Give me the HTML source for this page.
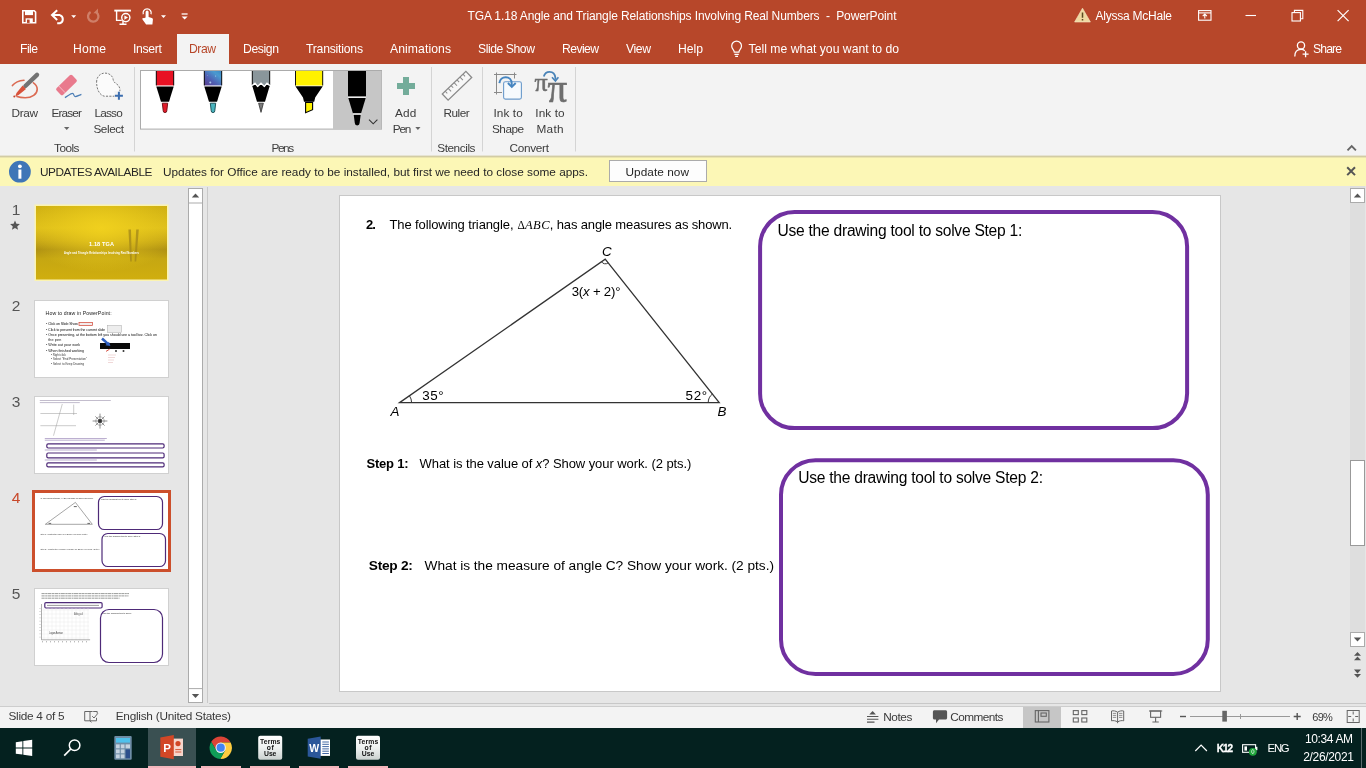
<!DOCTYPE html>
<html lang="en"><head><meta charset="utf-8"><title>TGA 1.18 Angle and Triangle Relationships Involving Real Numbers - PowerPoint</title>
<style>
html,body{margin:0;padding:0}
body{width:1366px;height:768px;overflow:hidden;position:relative;background:#E6E6E6;font-family:"Liberation Sans",sans-serif}
.r{position:absolute;left:0;width:1366px}
#titlebar{top:0;height:64px;background:#B7472A}
#tab-draw{position:absolute;left:177px;top:34px;width:52px;height:30px;background:#F3F3F3}
#ribbon{top:64px;height:92px;background:#F3F3F3;border-bottom:1px solid #D2CCA4;box-shadow:inset 0 -1px 0 #E6E3D2}
#msgbar{top:157px;height:29px;background:#FCF7B6;border-top:1px solid #EAE4AE;box-sizing:border-box}
#work{top:186px;height:520px;background:#E6E6E6}
#slide{position:absolute;left:340px;top:196px;width:880px;height:495px;background:#fff;box-shadow:0 0 0 1px #C8C8C8}
#hband{top:703px;left:209px;width:1157px;height:1px;background:#C8C8C8}
#sline{top:706px;height:1px;background:#CDCDCD}
#status{top:707px;height:21px;background:#F3F3F3}
#taskbar{top:728px;height:40px;background:#04211F}
svg{position:absolute;left:0;top:0;font-family:"Liberation Sans",sans-serif;will-change:transform}
svg text{white-space:pre}
</style></head>
<body>
<div class="r" id="titlebar"><div id="tab-draw"></div></div>
<div class="r" id="ribbon"></div>
<div class="r" id="msgbar"></div>
<div class="r" id="work"></div>
<div id="slide"></div>
<div class="r" id="hband"></div>
<div class="r" id="sline"></div>
<div class="r" id="status"></div>
<div class="r" id="taskbar"></div>
<!-- title bar + tabs -->
<svg width="1366" height="768" viewBox="0 0 1366 768">
<g fill="none" stroke="#fff" stroke-width="1.6"><path d="M22.8 10.8h11.4l1.4 1.4v10.6h-12.8z"/></g><rect x="25" y="10.5" width="8" height="4.6" fill="#fff"/><rect x="25.6" y="18.3" width="7.2" height="4.6" fill="#fff"/><rect x="27" y="19.6" width="2.6" height="3.3" fill="#B7472A"/><path d="M57.2 10.2 52 15.1l5.2 4.9M52.6 15.1h7.2a4.3 4.3 0 0 1 0 8.2h-2.6" fill="none" stroke="#fff" stroke-width="2"/><path d="M71.2 15.3h5l-2.5 2.8z" fill="#fff"/><path d="M90.600 12a5.200 5.200 0 1 0 5.600.2" fill="none" stroke="#CF7F68" stroke-width="2.300"/><path d="M93.400 13.200h4.600v-4.600z" fill="#CF7F68"/><g fill="none" stroke="#fff" stroke-width="1.4"><path d="M114.300 10.600h16.600" stroke-width="1.900"/><path d="M116.600 11v9.400h5.200M119.500 24.200h7M123 21v3"/><circle cx="125.8" cy="17.6" r="4.1" fill="#B7472A"/></g><path d="M124.4 15.4v4.4l3.6-2.2z" fill="#fff"/><path d="M145.6 17.5v-5.6a1.5 1.5 0 0 1 3 0v5l3.2 1c.9.3 1.2.9 1.1 1.8l-.5 4.9h-6.3l-3.6-5.2c-.5-.9.5-1.8 1.4-1.1z" fill="#fff"/><path d="M143.3 14.3a4.1 4.1 0 1 1 7.7 0" fill="none" stroke="#fff" stroke-width="1.3"/><path d="M161 15.3h5l-2.5 2.8z" fill="#fff"/><path d="M181.6 14h6" stroke="#fff" stroke-width="1.3"/><path d="M181.6 16.4h6l-3 3.2z" fill="#fff"/><text x="467.5" y="20" font-size="12" fill="#fff" textLength="429" lengthAdjust="spacing">TGA 1.18 Angle and Triangle Relationships Involving Real Numbers  -  PowerPoint</text>
<path d="M1082.5 8.2 1090.4 22h-15.8z" fill="#EFD9A0" stroke="#F6E9C8" stroke-width=".6"/><path d="M1082.5 12.6v5.2M1082.5 19v1.6" stroke="#5a4a20" stroke-width="1.5"/><text x="1095.5" y="20" font-size="12" fill="#fff" textLength="76.5" lengthAdjust="spacing">Alyssa McHale</text>
<g fill="none" stroke="#fff" stroke-width="1.1"><rect x="1198.6" y="10.6" width="12.4" height="9.6"/><path d="M1198.6 12.9h12.4"/><path d="M1204.8 18.4v-4.2M1202.7 16.2l2.1-2.1 2.1 2.1"/></g><path d="M1245.5 15.5h10.5" stroke="#fff" stroke-width="1.1"/><g fill="none" stroke="#fff" stroke-width="1.1"><rect x="1292" y="12.6" width="8.4" height="8.4"/><path d="M1294.4 12.4v-2h8.4v8.4h-2.2"/></g><path d="M1337.6 10.2l11 11M1348.6 10.2l-11 11" stroke="#fff" stroke-width="1.2"/><text x="20" y="52.7" font-size="12.2" fill="#fff" textLength="18" lengthAdjust="spacing">File</text>
<text x="73" y="52.7" font-size="12.2" fill="#fff" textLength="33" lengthAdjust="spacing">Home</text>
<text x="133" y="52.7" font-size="12.2" fill="#fff" textLength="29" lengthAdjust="spacing">Insert</text>
<text x="189" y="52.7" font-size="12.2" fill="#B7472A" textLength="27" lengthAdjust="spacing">Draw</text>
<text x="243" y="52.7" font-size="12.2" fill="#fff" textLength="36" lengthAdjust="spacing">Design</text>
<text x="306" y="52.7" font-size="12.2" fill="#fff" textLength="57" lengthAdjust="spacing">Transitions</text>
<text x="390" y="52.7" font-size="12.2" fill="#fff" textLength="61" lengthAdjust="spacing">Animations</text>
<text x="478" y="52.7" font-size="12.2" fill="#fff" textLength="57" lengthAdjust="spacing">Slide Show</text>
<text x="562" y="52.7" font-size="12.2" fill="#fff" textLength="37" lengthAdjust="spacing">Review</text>
<text x="626" y="52.7" font-size="12.2" fill="#fff" textLength="25" lengthAdjust="spacing">View</text>
<text x="678" y="52.7" font-size="12.2" fill="#fff" textLength="25" lengthAdjust="spacing">Help</text>
<g fill="none" stroke="#fff" stroke-width="1.2"><path d="M734.3 52.2c0-2.2-2.6-3-2.6-6.2a4.9 4.9 0 0 1 9.8 0c0 3.2-2.6 4-2.6 6.2z"/><path d="M734.400 54.400h4.400M735.200 56.400h2.800"/></g><text x="748.6" y="52.7" font-size="12.2" fill="#fff" textLength="150.5" lengthAdjust="spacing">Tell me what you want to do</text>
<g fill="none" stroke="#fff" stroke-width="1.3"><circle cx="1301" cy="45.4" r="3.6"/><path d="M1294.8 56.4c0-4.4 2.5-7 6.2-7 1.5 0 2.8.4 3.8 1.3"/><path d="M1305.6 51.2v6M1302.6 54.2h6"/></g><text x="1313" y="52.7" font-size="12.2" fill="#fff" textLength="29" lengthAdjust="spacing">Share</text>
</svg>
<!-- ribbon + message bar -->
<svg width="1366" height="768" viewBox="0 0 1366 768">
<g fill="none" stroke-linecap="round"><path d="M12.400 85.600c2.400-3 6.600-5 11.600-5.400" stroke="#DB6A52" stroke-width="1.600"/><path d="M33.400 82.800c2.400 1.600 3.800 3.800 3.800 6.400 0 5-5.400 8.600-12 8.600-3.200 0-6-.4-8.200-1.200" stroke="#DB6A52" stroke-width="1.600"/><path d="M37 74.800 25.400 86" stroke="#737373" stroke-width="4.400"/></g><path d="M22.600 85.600l3.400 3.400-7.400 6-3.400 1.500 1.300-3.600z" fill="#D8523A"/><circle cx="14.300" cy="96.600" r="1" fill="#C2452E"/><text x="11.5" y="116.6" font-size="11.8" fill="#3c3c3c" textLength="26.5" lengthAdjust="spacing">Draw</text>
<g transform="rotate(-44 66.500 85)"><rect x="55.600" y="80.300" width="21.800" height="9.400" rx="1.800" fill="#E97A8D"/><path d="M60.200 80.300v9.400" stroke="#F6C3CB" stroke-width=".9"/></g><path d="M64.900 97.600c2.600-1.400 6-4.200 7.600-4.200 1.800 0 .8 3.200 2.800 3.200 1.600 0 3.800-1.400 6.100-2.200" fill="none" stroke="#4A7DB5" stroke-width="1.200"/><text x="51.5" y="116.6" font-size="11.8" fill="#3c3c3c" textLength="30.4" lengthAdjust="spacing">Eraser</text>
<path d="M64 127h5.4l-2.700 2.900z" fill="#666"/><path d="M96.600 82c0-5.200 3.600-8.900 8.400-8.900 4.600 0 7.800 3 8.200 6.600.3 2.400 2 3.300 3.800 4.600 1.900 1.400 2.900 3.300 2.900 5.400v3.500c0 1.500-1.500 3-3 3h-12.700c-4.800-1.200-7.600-7-7.600-14.200z" fill="#FBFBFB" stroke="#777" stroke-width="1" stroke-dasharray="2.100 1.300"/><rect x="114.400" y="91.200" width="9" height="9" fill="#F3F3F3"/><path d="M118.900 91.700v8M114.900 95.700h8" stroke="#3B6DAE" stroke-width="2"/><text x="94.5" y="116.6" font-size="11.8" fill="#3c3c3c" textLength="28.2" lengthAdjust="spacing">Lasso</text>
<text x="93.4" y="132.6" font-size="11.8" fill="#3c3c3c" textLength="30.6" lengthAdjust="spacing">Select</text>
<text x="54.1" y="151.7" font-size="11.8" fill="#3c3c3c" textLength="25.3" lengthAdjust="spacing">Tools</text>
<path d="M134.5 67v84.500" stroke="#D4D4D4" stroke-width="1"/><path d="M431.5 67v84.500" stroke="#D4D4D4" stroke-width="1"/><path d="M482.5 67v84.500" stroke="#D4D4D4" stroke-width="1"/><path d="M575.5 67v84.500" stroke="#D4D4D4" stroke-width="1"/><rect x="140.500" y="70.500" width="241" height="58.600" fill="#fff" stroke="#ABABAB"/><rect x="333" y="71" width="48.500" height="58" fill="#C6C6C6"/><rect x="156" y="71" width="18" height="14.400" fill="#E81123"/><path d="M156.3 71v14.400M173.7 71v14.400" stroke="#111" stroke-width="1"/><path d="M156.3 86.500h17.400l-4.700 15.300h-8z" fill="#000"/><path d="M162.3 103.200h5.400l-.9 7.600a1.800 1.800 0 0 1-3.600 0z" fill="#E01B2A" stroke="#6A0A10" stroke-width=".9"/><defs><linearGradient id="gal" x1="0" y1="1" x2="1" y2="0"><stop offset="0" stop-color="#5A3A8E"/><stop offset=".4" stop-color="#4F62B4"/><stop offset=".75" stop-color="#4A9BD0"/><stop offset="1" stop-color="#3B86C4"/></linearGradient></defs><rect x="204" y="71" width="18" height="14.400" fill="url(#gal)"/><path d="M204.3 71v14.400M221.7 71v14.400" stroke="#111" stroke-width="1"/><path d="M204.3 86.500h17.400l-4.700 15.300h-8z" fill="#000"/><path d="M210.3 103.200h5.400l-.9 7.600a1.800 1.800 0 0 1-3.600 0z" fill="#49B4BE" stroke="#12474E" stroke-width=".9"/><circle cx="210.300" cy="82.400" r="1" fill="#A9C4EC"/><circle cx="215.600" cy="76" r=".6" fill="#9FD0EE"/><circle cx="207.400" cy="75.400" r=".5" fill="#8E84C8"/><path d="M252 71h18v15.500h-18z" fill="#8A969B"/><path d="M252.300 71v14M269.700 71v14" stroke="#111" stroke-width="1"/><path d="M252.400 86.200l2.600-2.200 2.600 3.200 3.400-3.200 3.400 3.200 2.600-3.200 2.600 2.200-4.600 15.600h-8z" fill="#000"/><path d="M252.200 85.600l2.800-2.400 2.600 3.200 3.400-3.200 3.400 3.200 2.600-3.200 2.800 2.400" fill="none" stroke="#fff" stroke-width="1.300"/><path d="M258.600 103.200h4.800l-2.400 9.200z" fill="#7B7B7B" stroke="#222" stroke-width=".7"/><rect x="295.200" y="70.800" width="27.800" height="14.700" fill="#FFF200"/><path d="M295.500 71v14.500M322.700 71v14.500" stroke="#111" stroke-width="1"/><path d="M295.400 86.200h27.400l-7.600 11.400-1 4.200h-10.200l-1-4.200z" fill="#000"/><path d="M305.600 102.400h7v7.300l-7 3z" fill="#FFF200" stroke="#000" stroke-width="1.100"/><rect x="348" y="71" width="18" height="25.500" fill="#000"/><path d="M348.300 98h17.400l-4.600 15.300h-8.200z" fill="#000"/><path d="M353.700 114.800h7l-1.100 8.200a2.400 2.400 0 0 1-4.800 0z" fill="#000"/><path d="M348 97.200h18M353 114h8.400" stroke="#fff" stroke-width="1"/><path d="M369 119.600l4.200 4.200 4.200-4.200" fill="none" stroke="#333" stroke-width="1.100"/><text x="271.5" y="151.7" font-size="11.8" fill="#3c3c3c" textLength="22.6" lengthAdjust="spacing">Pens</text>
<path d="M403 77h6v6h6v6h-6v6h-6v-6h-6v-6h6z" fill="#73AC9A"/><text x="395" y="116.6" font-size="11.8" fill="#3c3c3c" textLength="21.4" lengthAdjust="spacing">Add</text>
<text x="392.7" y="132.6" font-size="11.8" fill="#3c3c3c" textLength="18.6" lengthAdjust="spacing">Pen</text>
<path d="M415.300 127h5.200l-2.600 2.900z" fill="#666"/><g transform="rotate(-43.800 457 85.750)" fill="none" stroke="#8A8A8A"><rect x="440.650" y="81.550" width="32.700" height="8.400" stroke-width="1.300" fill="#F7F7F7"/><path d="M444.700 81.550v3M448.800 81.550v4.200M452.900 81.550v3M457 81.550v4.200M461.100 81.550v3M465.200 81.550v4.200M469.300 81.550v3" stroke-width="1"/></g><text x="443.4" y="116.6" font-size="11.8" fill="#3c3c3c" textLength="26.4" lengthAdjust="spacing">Ruler</text>
<text x="437.2" y="151.7" font-size="11.8" fill="#3c3c3c" textLength="38.3" lengthAdjust="spacing">Stencils</text>
<g fill="none" stroke="#8A8A8A" stroke-width="1"><path d="M496.500 72.500v22M514.500 72.500v6M494 74.500h22.500M494 92.500h8"/></g><rect x="503.600" y="81.700" width="17.800" height="17.400" rx="1.800" fill="#F6FAFD" stroke="#6C9BCB" stroke-width="1.100"/><path d="M499.400 83.200c.4-3.800 3.200-6 6.300-6 3.400 0 6 2.400 6 6.400v2.400" fill="none" stroke="#4585C0" stroke-width="2"/><path d="M507.900 83l3.900 4 3.900-4" fill="none" stroke="#4585C0" stroke-width="1.900"/><text x="493.4" y="116.6" font-size="11.8" fill="#3c3c3c" textLength="29.3" lengthAdjust="spacing">Ink to</text>
<text x="492" y="132.6" font-size="11.8" fill="#3c3c3c" textLength="32" lengthAdjust="spacing">Shape</text>
<text x="534.6" y="90.8" font-size="26" fill="#6E6E6E" font-family='"Liberation Serif", serif' stroke="#6E6E6E" stroke-width=".5">π</text>
<text x="547.6" y="101.6" font-size="39" fill="#6E6E6E" font-family='"Liberation Serif", serif' stroke="#6E6E6E" stroke-width=".6">π</text>
<path d="M543.800 76.600c.8-3 3.200-4.800 5.800-4.800 3 0 5.400 2 5.800 6v2" fill="none" stroke="#4A84B8" stroke-width="1.800"/><path d="M552 77.200l3.400 3.800 3-3.800" fill="none" stroke="#4A84B8" stroke-width="1.600"/><text x="535.3" y="116.6" font-size="11.8" fill="#3c3c3c" textLength="29.3" lengthAdjust="spacing">Ink to</text>
<text x="536.4" y="132.6" font-size="11.8" fill="#3c3c3c" textLength="27.2" lengthAdjust="spacing">Math</text>
<text x="509.6" y="151.7" font-size="11.8" fill="#3c3c3c" textLength="39.4" lengthAdjust="spacing">Convert</text>
<path d="M1347.500 150.300l4.200-4.200 4.200 4.200" fill="none" stroke="#666" stroke-width="1.900"/><circle cx="19.900" cy="171.700" r="10.900" fill="#3F76B7"/><rect x="18.400" y="169.500" width="3" height="9.200" fill="#fff"/><circle cx="19.900" cy="166.300" r="1.900" fill="#fff"/><text x="40" y="176" font-size="11.8" fill="#262626" textLength="112.4" lengthAdjust="spacing">UPDATES AVAILABLE</text>
<text x="163" y="176" font-size="11.8" fill="#262626" textLength="425" lengthAdjust="spacing">Updates for Office are ready to be installed, but first we need to close some apps.</text>
<rect x="609.500" y="160.500" width="97" height="21" fill="#FDFDFD" stroke="#ABABAB"/><text x="625.5" y="176" font-size="11.8" fill="#262626" textLength="63.5" lengthAdjust="spacing">Update now</text>
<path d="M1347.200 167.300l7.800 7.800M1355 167.300l-7.800 7.800" stroke="#555" stroke-width="2"/></svg>
<!-- thumbnail panel -->
<svg width="1366" height="768" viewBox="0 0 1366 768">
<text x="11.8" y="214.6" font-size="15.5" fill="#555">1</text>
<text x="11.8" y="311.4" font-size="15.5" fill="#555">2</text>
<text x="11.8" y="407.4" font-size="15.5" fill="#555">3</text>
<text x="11.8" y="503.4" font-size="15.5" fill="#C8482A">4</text>
<text x="11.8" y="599.4" font-size="15.5" fill="#555">5</text>
<path d="M15 220.600l1.400 3.200 3.500.3-2.700 2.300.9 3.400-3.100-1.900-3.100 1.900.9-3.400-2.700-2.300 3.500-.3z" fill="#555"/><defs><linearGradient id="t1" x1="0" y1="0" x2="0" y2="1"><stop offset="0" stop-color="#CDAE12"/><stop offset=".3" stop-color="#DDBE1A"/><stop offset=".47" stop-color="#C6A616"/><stop offset=".59" stop-color="#AE9012"/><stop offset=".72" stop-color="#C6A712"/><stop offset="1" stop-color="#D0AE0E"/></linearGradient><radialGradient id="t1r" cx=".5" cy=".3" r=".6"><stop offset="0" stop-color="#F2D21E" stop-opacity=".9"/><stop offset="1" stop-color="#F2D21E" stop-opacity="0"/></radialGradient></defs><rect x="34.500" y="204.500" width="134" height="76.500" fill="#FBF3B0"/><rect x="36" y="206" width="131" height="73.500" fill="url(#t1)"/><rect x="36" y="206" width="131" height="73.500" fill="url(#t1r)"/><path d="M128.400 229.500h2.600l.8 32h-1.600zM138.800 229.500h-2.600l-1.600 32h1.600z" fill="#A3871A" opacity=".75"/><text x="101.5" y="246" font-size="5.6" fill="#fff" textLength="25" lengthAdjust="spacing" font-weight="bold" text-anchor="middle">1.18 TGA</text>
<text x="101.5" y="254.2" font-size="2.6" fill="#fff" textLength="75" lengthAdjust="spacing" font-weight="bold" text-anchor="middle">Angle and Triangle Relationships Involving Real Numbers</text>
<rect x="34.500" y="300.500" width="134" height="77" fill="#fff" stroke="#D0D0D0"/><text x="45.6" y="314.6" font-size="5.2" fill="#222" textLength="66" lengthAdjust="spacing">How to draw in PowerPoint:</text>
<text x="46" y="325" font-size="3.7" fill="#111" textLength="32" lengthAdjust="spacing">• Click on Slide Show</text>
<text x="46" y="331" font-size="3.7" fill="#111" textLength="59" lengthAdjust="spacing">• Click to present from the current slide</text>
<text x="46" y="336.2" font-size="3.7" fill="#111" textLength="111" lengthAdjust="spacing">• Once presenting, at the bottom left you should see a tool bar. Click on</text>
<text x="48.2" y="341" font-size="3.7" fill="#111" textLength="13" lengthAdjust="spacing">the pen</text>
<text x="46" y="346" font-size="3.7" fill="#111" textLength="34" lengthAdjust="spacing">• Write out your work</text>
<text x="46" y="351.8" font-size="3.7" fill="#111" textLength="38" lengthAdjust="spacing">• When finished working</text>
<text x="51" y="356" font-size="2.9" fill="#333" textLength="15" lengthAdjust="spacing">• Right click</text>
<text x="51" y="360.2" font-size="2.9" fill="#333" textLength="36" lengthAdjust="spacing">• Select "End Presentation"</text>
<text x="51" y="365" font-size="2.9" fill="#333" textLength="33" lengthAdjust="spacing">• Select to Keep Drawing</text>
<rect x="79" y="322.400" width="13.600" height="3.200" fill="#F3ECEC" stroke="#D04030" stroke-width=".7"/><rect x="107.400" y="325.400" width="14" height="7" fill="#EDEDED" stroke="#AAA" stroke-width=".5"/><rect x="100" y="343" width="30" height="6" fill="#0A0A0A"/><path d="M102 338.500l6 5.400" stroke="#2F5FC0" stroke-width="2.600"/><path d="M110.400 346l-5-.8 3.600-3.400z" fill="#2F5FC0"/><path d="M106 351.400l3.600-2.200" stroke="#D04030" stroke-width=".9"/><circle cx="116" cy="351" r="1" fill="#333"/><circle cx="123.500" cy="351" r="1" fill="#333"/><g stroke="#E0B0B0" stroke-width=".5"><path d="M108 355h8M108 357.500h7M108 360h6M108 362.500h5"/></g><rect x="34.500" y="396.500" width="134" height="77" fill="#fff" stroke="#D0D0D0"/><g stroke="#999" stroke-width=".5" fill="none"><path d="M39.800 400.500h71M39.800 402.600h40" stroke="#A9A0B8" stroke-width=".7"/><path d="M40.400 413.500h36.600M40.400 425.700h35.600M62.300 404l-8.800 31.700M73.700 404.600v10.400"/></g><g stroke="#444" stroke-width=".6"><path d="M100 413.600v15M92.600 421h14.800M95.400 416.400l9.200 9.200M104.600 416.400l-9.200 9.200"/></g><circle cx="100" cy="421" r="4.200" fill="none" stroke="#666" stroke-width=".5"/><circle cx="100" cy="421" r="2" fill="#333"/><g stroke="#8E78B0" stroke-width=".6"><path d="M44.800 438.500h62M44.800 440.200h60M44.800 450h52M44.800 460h52"/></g><rect x="46.800" y="443.8" width="117.300" height="4.2" rx="1.400" fill="#fff" stroke="#4E2A78" stroke-width="1.200"/><rect x="46.800" y="453" width="117.300" height="4.8" rx="1.400" fill="#fff" stroke="#4E2A78" stroke-width="1.200"/><rect x="46.800" y="462.9" width="117.300" height="4" rx="1.400" fill="#fff" stroke="#4E2A78" stroke-width="1.200"/><rect x="33.500" y="491.500" width="136" height="79" fill="#fff" stroke="#CC4F2C" stroke-width="3"/><text x="40.4" y="498.5" font-size="2.2" fill="#444" textLength="53" lengthAdjust="spacing">2.  The following triangle, ΔABC, has angle measures as shown.</text>
<path d="M45.300 524.300 75.400 502.400 92.300 524.300z" fill="none" stroke="#808080" stroke-width=".7"/><path d="M48.600 523.400h2.600M87.400 523.400h2.600M73.800 506.600h3" stroke="#666" stroke-width="1"/><text x="40.4" y="534.8" font-size="2.2" fill="#444" textLength="47" lengthAdjust="spacing">Step 1:  What is the value of x? Show your work. (2 pts.)</text>
<text x="40.4" y="550" font-size="2.2" fill="#444" textLength="59" lengthAdjust="spacing">Step 2:  What is the measure of angle C? Show your work. (2 pts.)</text>
<rect x="98.500" y="496.500" width="64" height="33" rx="5.800" fill="#fff" stroke="#4E2A78" stroke-width="1.200"/><rect x="102" y="533.500" width="63.500" height="33" rx="5.800" fill="#fff" stroke="#4E2A78" stroke-width="1.200"/><text x="101" y="500.4" font-size="2.3" fill="#333" textLength="36" lengthAdjust="spacing">Use the drawing tool to solve Step 1:</text>
<text x="104.5" y="537.4" font-size="2.3" fill="#333" textLength="36" lengthAdjust="spacing">Use the drawing tool to solve Step 2:</text>
<rect x="34.500" y="588.500" width="134" height="77" fill="#fff" stroke="#D0D0D0"/><g stroke="#8E928E" stroke-width=".9" stroke-dasharray="3.200 .5 1.800 .4 4.100 .5 2.400 .4"><path d="M41.500 593.600h87.500M41.500 595.900h87M41.500 598.200h78"/></g><rect x="44.800" y="602.600" width="57.300" height="5.400" rx="1.200" fill="#fff" stroke="#4E2A78" stroke-width="1.200"/><path d="M47 605.400h52" stroke="#555" stroke-width=".6"/><g stroke="#E3E3E3" stroke-width=".4"><path d="M44 608v32"/><path d="M48 608v32"/><path d="M52 608v32"/><path d="M56 608v32"/><path d="M60 608v32"/><path d="M64 608v32"/><path d="M68 608v32"/><path d="M72 608v32"/><path d="M76 608v32"/><path d="M80 608v32"/><path d="M84 608v32"/><path d="M88 608v32"/><path d="M41 610h48"/><path d="M41 614h48"/><path d="M41 618h48"/><path d="M41 622h48"/><path d="M41 626h48"/><path d="M41 630h48"/><path d="M41 634h48"/><path d="M41 638h48"/></g><path d="M41.500 604v35.800h48.600" fill="none" stroke="#777" stroke-width=".6"/><path d="M42 641.800h46" stroke="#888" stroke-width="1" stroke-dasharray=".8 3.200"/><path d="M40 608v30" stroke="#999" stroke-width="1" stroke-dasharray=".6 2.600"/><text x="74" y="615.2" font-size="2.6" fill="#555" textLength="9" lengthAdjust="spacing">Abigail</text>
<text x="49" y="633.6" font-size="2.6" fill="#555" textLength="14" lengthAdjust="spacing">Logan Avenue</text>
<rect x="100.500" y="609.500" width="62" height="53" rx="8.500" fill="#fff" stroke="#4E2A78" stroke-width="1.200"/><text x="102.7" y="614.2" font-size="2.3" fill="#333" textLength="29" lengthAdjust="spacing">Use the drawing tool to solve:</text>
<rect x="188.500" y="188.500" width="14" height="514" fill="#fff" stroke="#ABABAB"/><path d="M188.500 203h14" stroke="#ABABAB"/><path d="M188.500 688.600h14" stroke="#ABABAB"/><path d="M191.800 197.600h7.400l-3.700-4z" fill="#555"/><path d="M191.800 694h7.400l-3.700 4z" fill="#555"/><path d="M207.500 187v516" stroke="#C9C9C9"/></svg>
<!-- slide -->
<svg width="1366" height="768" viewBox="0 0 1366 768">
<text x="366" y="228.9" font-size="13" fill="#000" textLength="9.8" lengthAdjust="spacing" font-weight="bold">2.</text>
<text x="389.5" y="228.9" font-size="13" fill="#000" textLength="124" lengthAdjust="spacing">The following triangle,</text>
<text x="517.5" y="228.9" font-size="11.5" fill="#000" textLength="7" lengthAdjust="spacing" font-family='"Liberation Serif", "DejaVu Serif", serif'>Δ</text>
<text x="525" y="228.9" font-size="12.5" fill="#000" textLength="24.5" lengthAdjust="spacing" font-style="italic" font-family='"Liberation Serif", "DejaVu Serif", serif'>ABC</text>
<text x="549.8" y="228.9" font-size="13" fill="#000" textLength="182.4" lengthAdjust="spacing">, has angle measures as shown.</text>
<path d="M399.600 402.600 605.200 259.200 719.200 402.600z" fill="none" stroke="#333" stroke-width="1.300" stroke-linejoin="miter"/><g fill="none" stroke="#333" stroke-width="1"><path d="M411.600 402.600a12 12 0 0 0-2.200-6.900"/><path d="M708.200 402.600a11 11 0 0 1 4.200-8.600"/><path d="M601.500 261.800a4.600 4.600 0 0 0 6.600 1.100"/></g><text x="602" y="255.9" font-size="13.4" fill="#000" textLength="8.8" lengthAdjust="spacing" font-style="italic">C</text>
<text x="571.7" y="296" font-size="13.2" fill="#000" textLength="48.8" lengthAdjust="spacing">3(<tspan font-style="italic">x</tspan> + 2)°</text>
<text x="422.3" y="400" font-size="13.4" fill="#000" textLength="21.2" lengthAdjust="spacing">35°</text>
<text x="685.6" y="400" font-size="13.4" fill="#000" textLength="21.5" lengthAdjust="spacing">52°</text>
<text x="390.4" y="416.3" font-size="13.4" fill="#000" textLength="9.6" lengthAdjust="spacing" font-style="italic">A</text>
<text x="717.5" y="416.3" font-size="13.4" fill="#000" textLength="8.8" lengthAdjust="spacing" font-style="italic">B</text>
<text x="366.4" y="468.1" font-size="13" fill="#000" textLength="42.3" lengthAdjust="spacing" font-weight="bold">Step 1:</text>
<text x="419.6" y="468.1" font-size="13" fill="#000" textLength="271.8" lengthAdjust="spacing">What is the value of <tspan font-style="italic">x</tspan>? Show your work. (2 pts.)</text>
<text x="368.8" y="570.3" font-size="13.7" fill="#000" textLength="44" lengthAdjust="spacing" font-weight="bold">Step 2:</text>
<text x="424.6" y="570.3" font-size="13.7" fill="#000" textLength="349.4" lengthAdjust="spacing">What is the measure of angle C? Show your work. (2 pts.)</text>
<rect x="760.100" y="211.900" width="427" height="216.200" rx="34.500" fill="#fff" stroke="#7030A0" stroke-width="4"/><rect x="781" y="460.300" width="426.800" height="213.700" rx="34.500" fill="#fff" stroke="#7030A0" stroke-width="4"/><text x="777.5" y="235.8" font-size="15.6" fill="#000" textLength="244.8" lengthAdjust="spacing">Use the drawing tool to solve Step 1:</text>
<text x="798.2" y="483" font-size="15.6" fill="#000" textLength="244.8" lengthAdjust="spacing">Use the drawing tool to solve Step 2:</text>
<rect x="1350" y="186" width="15" height="460" fill="#DEDEDE"/><rect x="1350.500" y="188.500" width="14" height="14" fill="#fff" stroke="#ABABAB"/><path d="M1353.800 197.600h7.400l-3.700-4z" fill="#555"/><rect x="1350.500" y="460.500" width="14" height="85" fill="#fff" stroke="#999"/><rect x="1350.500" y="632.500" width="14" height="14" fill="#fff" stroke="#ABABAB"/><path d="M1353.800 637.600h7.400l-3.700 4z" fill="#555"/><path d="M1354 655.800h7l-3.500-3.800zM1354 660.200h7l-3.500-3.800z" fill="#555"/><path d="M1354 669.600h7l-3.500 3.800zM1354 674h7l-3.500 3.800z" fill="#555"/></svg>
<!-- status + taskbar -->
<svg width="1366" height="768" viewBox="0 0 1366 768">
<text x="8.5" y="720.2" font-size="11.8" fill="#3a3a3a" textLength="56" lengthAdjust="spacing">Slide 4 of 5</text>
<g fill="none" stroke="#666" stroke-width="1"><path d="M84.700 711.500h5.300v9.300h-5.300zM90 711.500h2.600M90 720.800h6.500v-3"/><path d="M90 720.800l1.400 1.600"/><path d="M92.200 716.200l1.800 1.800 3.800-4.600"/><path d="M93.200 711.500h4v2"/></g><text x="115.7" y="720.2" font-size="11.8" fill="#3a3a3a" textLength="115.3" lengthAdjust="spacing">English (United States)</text>
<path d="M872.600 711l3.300 3.400h-6.600z" fill="#555"/><g stroke="#555" stroke-width="1.100"><path d="M867 716.500h11.400M867 719.300h11.400M867 722.100h7.500"/></g><text x="883.3" y="720.8" font-size="11.8" fill="#3a3a3a" textLength="29" lengthAdjust="spacing">Notes</text>
<path d="M934.400 710.200h11.200c.8 0 1.500.7 1.500 1.500v6.300c0 .8-.7 1.500-1.500 1.500h-6.600l-3 3.800v-3.800h-1.600c-.8 0-1.500-.7-1.500-1.500v-6.300c0-.8.700-1.500 1.500-1.500z" fill="#555"/><text x="950.3" y="720.8" font-size="11.8" fill="#3a3a3a" textLength="53.1" lengthAdjust="spacing">Comments</text>
<rect x="1023" y="707" width="38" height="21" fill="#C6C6C6"/><g fill="none" stroke="#666" stroke-width="1.100"><rect x="1035.300" y="710.600" width="13.600" height="11.400"/><path d="M1038.400 710.600v11.400"/><rect x="1041" y="713" width="5.300" height="3.300"/></g><g fill="none" stroke="#666" stroke-width="1.100"><rect x="1073.300" y="710.600" width="5" height="4"/><rect x="1081.800" y="710.600" width="5" height="4"/><rect x="1073.300" y="718" width="5" height="4"/><rect x="1081.800" y="718" width="5" height="4"/></g><g fill="none" stroke="#666" stroke-width="1"><path d="M1117.600 712.200c-2-1.400-4.200-1.600-6.100-1.200v9.800c1.900-.4 4.100-.2 6.100 1.200 2-1.400 4.200-1.600 6.100-1.200v-9.800c-1.900-.4-4.100-.2-6.100 1.200zM1117.600 712.200v11"/><path d="M1112.800 713.400h3.400M1112.800 715.400h3.400M1112.800 717.400h3.400M1119 713.400h3.400M1119 715.400h3.400M1119 717.400h3.400" stroke-width=".7"/></g><g fill="none" stroke="#666" stroke-width="1.100"><path d="M1149 711h13.200"/><rect x="1150.600" y="711" width="10" height="6.300"/><path d="M1155.600 717.300v4.200M1152.400 722h6.400"/></g><path d="M1180 716.500h6" stroke="#555" stroke-width="1.400"/><path d="M1190 716.500h100" stroke="#999" stroke-width="1"/><path d="M1240.500 714v5" stroke="#999"/><rect x="1222.300" y="710.800" width="4.600" height="10.800" fill="#666"/><path d="M1293.700 716.500h7M1297.200 713v7" stroke="#555" stroke-width="1.400"/><text x="1312.3" y="720.8" font-size="11" fill="#3a3a3a" textLength="20.5" lengthAdjust="spacing">69%</text>
<g fill="none" stroke="#666" stroke-width="1"><rect x="1347.200" y="710.500" width="12" height="12"/><path d="M1353.200 711.500v3M1353.200 718.500v3M1348.200 716.500h3M1355.200 716.500h3"/></g><path d="M15.800 742.200l6.600-.9v6.200h-6.600zM23.300 741.100l8.900-1.300v7.700h-8.900zM15.800 748.400h6.600v6.200l-6.600-.9zM23.300 748.400h8.900v7.700l-8.900-1.300z" fill="#fff"/><circle cx="74.600" cy="745.200" r="5.300" fill="none" stroke="#fff" stroke-width="1.500"/><path d="M70.800 749l-6.600 6.600" stroke="#fff" stroke-width="1.700"/><rect x="114.300" y="736" width="17.400" height="23.800" rx="1" fill="#6E8DA6"/><rect x="116" y="738" width="14" height="4.600" fill="#4FC1EC"/><rect x="116" y="744.4" width="3.700" height="3.900" fill="#C5D3E0"/><rect x="120.8" y="744.4" width="3.700" height="3.900" fill="#C5D3E0"/><rect x="116" y="749.4" width="3.700" height="3.900" fill="#C5D3E0"/><rect x="120.8" y="749.4" width="3.700" height="3.900" fill="#C5D3E0"/><rect x="116" y="754.4" width="3.700" height="3.900" fill="#C5D3E0"/><rect x="120.8" y="754.4" width="3.700" height="3.900" fill="#C5D3E0"/><rect x="125.600" y="744.400" width="4.400" height="3.900" fill="#C5D3E0"/><rect x="125.600" y="749.400" width="4.400" height="8.900" fill="#2C4F8C"/><rect x="148" y="728" width="48" height="40" fill="#3A5052"/><rect x="148" y="766" width="48" height="2" fill="#F3B6BC"/><rect x="173" y="738.600" width="10" height="17.400" fill="#F7D5CB"/><circle cx="178" cy="743.600" r="2.600" fill="#D24726"/><path d="M175.300 749.600h6M175.300 752h6" stroke="#D24726" stroke-width=".9"/><path d="M160.300 737.600l13.500-2.500v24.200l-13.500-2.500z" fill="#D24726"/><text x="163.2" y="751.6" font-size="11.5" fill="#fff" font-weight="bold">P</text>
<rect x="201" y="766" width="40" height="2" fill="#F3B6BC"/><rect x="250" y="766" width="40" height="2" fill="#F3B6BC"/><rect x="299" y="766" width="40" height="2" fill="#F3B6BC"/><rect x="348" y="766" width="40" height="2" fill="#F3B6BC"/><path d="M220.700 747.700V742.500H230.620A11.200 11.200 0 0 0 211.240 741.710L216.200 750.300z" fill="#DB4437"/><path d="M220.700 747.700L225.200 750.300 220.240 758.890A11.200 11.200 0 0 0 230.620 742.500H220.700z" fill="#FFCD40"/><path d="M220.700 747.700L216.200 750.300 211.240 741.710A11.200 11.200 0 0 0 220.240 758.890L225.200 750.300z" fill="#0F9D58"/><circle cx="220.700" cy="747.700" r="5.200" fill="#F1F1F1"/><circle cx="220.700" cy="747.700" r="4.100" fill="#4285F4"/><defs><linearGradient id="tg258" x1="0" y1="0" x2="0" y2="1"><stop offset="0" stop-color="#FFFFFF"/><stop offset=".5" stop-color="#EEF1F0"/><stop offset="1" stop-color="#CBD1CF"/></linearGradient></defs><rect x="258.2" y="735.800" width="24" height="24" rx="2" fill="url(#tg258)"/><text x="260.0" y="743.6" font-size="6.8" fill="#111" textLength="20.4" lengthAdjust="spacing" font-weight="bold">Terms</text>
<text x="266.7" y="750" font-size="6.8" fill="#111" textLength="7" lengthAdjust="spacing" font-weight="bold">of</text>
<text x="264.0" y="756.4" font-size="6.8" fill="#111" textLength="12.4" lengthAdjust="spacing" font-weight="bold">Use</text>
<defs><linearGradient id="tg356" x1="0" y1="0" x2="0" y2="1"><stop offset="0" stop-color="#FFFFFF"/><stop offset=".5" stop-color="#EEF1F0"/><stop offset="1" stop-color="#CBD1CF"/></linearGradient></defs><rect x="356" y="735.800" width="24" height="24" rx="2" fill="url(#tg356)"/><text x="357.8" y="743.6" font-size="6.8" fill="#111" textLength="20.4" lengthAdjust="spacing" font-weight="bold">Terms</text>
<text x="364.5" y="750" font-size="6.8" fill="#111" textLength="7" lengthAdjust="spacing" font-weight="bold">of</text>
<text x="361.8" y="756.4" font-size="6.8" fill="#111" textLength="12.4" lengthAdjust="spacing" font-weight="bold">Use</text>
<rect x="319" y="739.500" width="11" height="16.400" fill="#fff"/><g stroke="#2B579A" stroke-width=".9"><path d="M322.300 742h6.600M322.300 744.300h6.600M322.300 746.600h6.600M322.300 748.900h6.600M322.300 751.200h6.600M322.300 753.500h6.600"/></g><path d="M307.700 738.800l13-2.200v22.200l-13-2.200z" fill="#2B579A"/><text x="309.3" y="752" font-size="10.5" fill="#fff" font-weight="bold">W</text>
<path d="M1195.300 751l5.800-5.800 5.800 5.800" fill="none" stroke="#fff" stroke-width="1.200"/><text x="1216.8" y="752" font-size="10" fill="#fff" textLength="16.3" lengthAdjust="spacing" font-weight="bold" stroke="#fff" stroke-width=".3">K12</text>
<rect x="1242.600" y="744.700" width="13" height="7.600" fill="none" stroke="#fff" stroke-width="1.100"/><rect x="1256" y="746.800" width="1.400" height="3.400" fill="#fff"/><rect x="1244.400" y="746.400" width="2.600" height="4.200" fill="#fff"/><circle cx="1252.800" cy="751.800" r="3.900" fill="#1FA43A"/><path d="M1252.800 749.400c1.600 1.200 1.600 3 0 4.400-1.600-1.400-1.600-3.200 0-4.400z" fill="none" stroke="#fff" stroke-width=".7"/><text x="1267.6" y="752" font-size="11.3" fill="#fff" textLength="22" lengthAdjust="spacing">ENG</text>
<text x="1305" y="742.5" font-size="12" fill="#fff" textLength="48" lengthAdjust="spacing">10:34 AM</text>
<text x="1303.2" y="760.8" font-size="12" fill="#fff" textLength="50.8" lengthAdjust="spacing">2/26/2021</text>
<path d="M1361.500 728v40" stroke="#5A6B6D"/></svg>
</body></html>
